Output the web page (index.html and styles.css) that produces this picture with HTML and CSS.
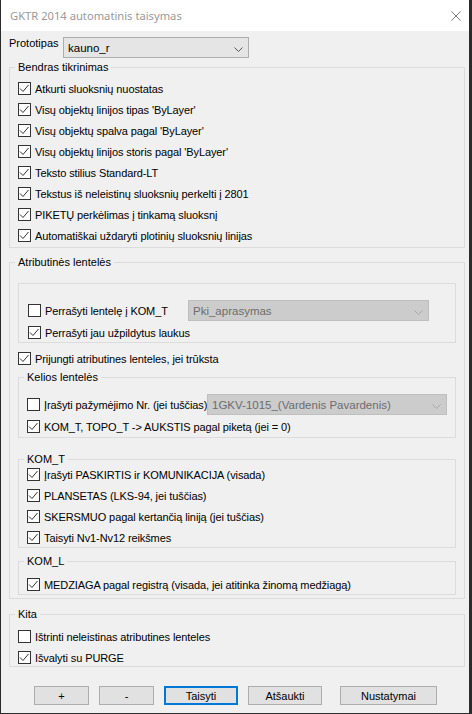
FILE: index.html
```html
<!DOCTYPE html>
<html lang="lt">
<head>
    <meta charset="UTF-8">
    <meta name="viewport" content="width=device-width, initial-scale=1.0">
    <title>GKTR 2014 automatinis taisymas</title>
    <link rel="stylesheet" href="styles.css">
</head>
<body>
    <div class="window">
        <div class="titlebar">
            <span class="title">GKTR 2014 automatinis taisymas</span>
            <svg class="close-icon" width="10" height="10" viewBox="0 0 10 10">
                <path d="M0.5 0.5L9.5 9.5M9.5 0.5L0.5 9.5"/>
            </svg>
        </div>

        <div class="content">
            <div class="proto-row">
                <span class="proto-label">Prototipas</span>
                <div class="combo combo-proto">
                    <span>kauno_r</span>
                    <svg class="chevron" width="9" height="5" viewBox="0 0 9 5"><path d="M0.5 0.5L4.5 4.5L8.5 0.5"/></svg>
                </div>
            </div>

            <!-- Bendras tikrinimas -->
            <fieldset class="group group-general">
                <legend>Bendras tikrinimas</legend>
                <label class="check"><span class="box on"><svg viewBox="0 0 11 11"><path d="M1 5.5L4 8.5L9.5 2"/></svg></span>Atkurti sluoksnių nuostatas</label>
                <label class="check"><span class="box on"><svg viewBox="0 0 11 11"><path d="M1 5.5L4 8.5L9.5 2"/></svg></span>Visų objektų linijos tipas 'ByLayer'</label>
                <label class="check"><span class="box on"><svg viewBox="0 0 11 11"><path d="M1 5.5L4 8.5L9.5 2"/></svg></span>Visų objektų spalva pagal 'ByLayer'</label>
                <label class="check"><span class="box on"><svg viewBox="0 0 11 11"><path d="M1 5.5L4 8.5L9.5 2"/></svg></span>Visų objektų linijos storis pagal 'ByLayer'</label>
                <label class="check"><span class="box on"><svg viewBox="0 0 11 11"><path d="M1 5.5L4 8.5L9.5 2"/></svg></span>Teksto stilius Standard-LT</label>
                <label class="check"><span class="box on"><svg viewBox="0 0 11 11"><path d="M1 5.5L4 8.5L9.5 2"/></svg></span>Tekstus iš neleistinų sluoksnių perkelti į 2801</label>
                <label class="check"><span class="box on"><svg viewBox="0 0 11 11"><path d="M1 5.5L4 8.5L9.5 2"/></svg></span>PIKETŲ perkėlimas į tinkamą sluoksnį</label>
                <label class="check"><span class="box on"><svg viewBox="0 0 11 11"><path d="M1 5.5L4 8.5L9.5 2"/></svg></span>Automatiškai uždaryti plotinių sluoksnių linijas</label>
            </fieldset>

            <!-- Atributinės lentelės -->
            <fieldset class="group group-attr">
                <legend>Atributinės lentelės</legend>

                <div class="subbox">
                    <div class="combo-row">
                        <label class="check label-160"><span class="box"></span>Perrašyti lentelę į KOM_T</label>
                        <div class="combo combo-off combo-pki">
                            <span>Pki_aprasymas</span>
                            <svg class="chevron" width="9" height="5" viewBox="0 0 9 5"><path d="M0.5 0.5L4.5 4.5L8.5 0.5"/></svg>
                        </div>
                    </div>
                    <label class="check"><span class="box on"><svg viewBox="0 0 11 11"><path d="M1 5.5L4 8.5L9.5 2"/></svg></span>Perrašyti jau užpildytus laukus</label>
                </div>

                <label class="check check-join"><span class="box on"><svg viewBox="0 0 11 11"><path d="M1 5.5L4 8.5L9.5 2"/></svg></span>Prijungti atributines lenteles, jei trūksta</label>

                <fieldset class="group group-multi">
                    <legend>Kelios lentelės</legend>
                    <div class="combo-row">
                        <label class="check label-180"><span class="box"></span>Įrašyti pažymėjimo Nr. (jei tuščias)</label>
                        <div class="combo combo-off combo-gkv">
                            <span>1GKV-1015_(Vardenis Pavardenis)</span>
                            <svg class="chevron" width="9" height="5" viewBox="0 0 9 5"><path d="M0.5 0.5L4.5 4.5L8.5 0.5"/></svg>
                        </div>
                    </div>
                    <label class="check"><span class="box on"><svg viewBox="0 0 11 11"><path d="M1 5.5L4 8.5L9.5 2"/></svg></span>KOM_T, TOPO_T -&gt; AUKSTIS pagal piketą (jei = 0)</label>
                </fieldset>

                <fieldset class="group group-komt">
                    <legend>KOM_T</legend>
                    <label class="check"><span class="box on"><svg viewBox="0 0 11 11"><path d="M1 5.5L4 8.5L9.5 2"/></svg></span>Įrašyti PASKIRTIS ir KOMUNIKACIJA (visada)</label>
                    <label class="check"><span class="box on"><svg viewBox="0 0 11 11"><path d="M1 5.5L4 8.5L9.5 2"/></svg></span>PLANSETAS (LKS-94, jei tuščias)</label>
                    <label class="check"><span class="box on"><svg viewBox="0 0 11 11"><path d="M1 5.5L4 8.5L9.5 2"/></svg></span>SKERSMUO pagal kertančią liniją (jei tuščias)</label>
                    <label class="check"><span class="box on"><svg viewBox="0 0 11 11"><path d="M1 5.5L4 8.5L9.5 2"/></svg></span>Taisyti Nv1-Nv12 reikšmes</label>
                </fieldset>

                <fieldset class="group group-koml">
                    <legend>KOM_L</legend>
                    <label class="check"><span class="box on"><svg viewBox="0 0 11 11"><path d="M1 5.5L4 8.5L9.5 2"/></svg></span>MEDZIAGA pagal registrą (visada, jei atitinka žinomą medžiagą)</label>
                </fieldset>
            </fieldset>

            <!-- Kita -->
            <fieldset class="group group-other">
                <legend>Kita</legend>
                <label class="check"><span class="box"></span>Ištrinti neleistinas atributines lenteles</label>
                <label class="check"><span class="box on"><svg viewBox="0 0 11 11"><path d="M1 5.5L4 8.5L9.5 2"/></svg></span>Išvalyti su PURGE</label>
            </fieldset>

            <div class="buttons">
                <button class="btn btn-small">+</button>
                <button class="btn btn-small">-</button>
                <button class="btn btn-mid btn-default">Taisyti</button>
                <button class="btn btn-mid">Atšaukti</button>
                <button class="btn btn-wide">Nustatymai</button>
            </div>
        </div>
    </div>
</body>
</html>
```

FILE: styles.css
```css
* {
    box-sizing: border-box;
}

html, body {
    margin: 0;
    height: 100%;
}

body {
    background-color: #2b2b2b;
    font-family: "Liberation Sans", Arial, sans-serif;
    font-size: 11px;
    color: #000;
}

.window {
    width: 468px;
    height: 713px;
    margin-left: 1px;
    background-color: #f0f0f0;
}

.titlebar {
    height: 31px;
    background-color: #fff;
    display: flex;
    align-items: center;
    justify-content: space-between;
    padding: 0 8px 0 9px;
}

.title {
    font-family: "Noto Sans", "Open Sans", sans-serif;
    font-size: 11.2px;
    color: #999;
}

.close-icon path {
    stroke: #777;
    stroke-width: 1;
    fill: none;
}

.content {
    padding: 6px 4px 0 8px;
}

.proto-row {
    display: flex;
    height: 21px;
}

.proto-label {
    width: 54px;
    line-height: 13px;
}

.combo {
    height: 21px;
    display: flex;
    justify-content: space-between;
    padding: 4px 5px 0 4px;
    border: 1px solid #adadad;
    background-color: #e5e5e5;
    font-size: 11.5px;
    line-height: 13px;
}

.combo .chevron {
    margin-top: 5px;
}

.chevron path {
    fill: none;
    stroke: #555;
    stroke-width: 1;
}

.combo-proto {
    width: 186px;
}

.combo-off {
    background-color: #cccccc;
    border-color: #bfbfbf;
    color: #6d6d6d;
}

.combo-off .chevron path {
    stroke: #a8a8a8;
}

.combo-pki {
    width: 241px;
}

.combo-gkv {
    width: 240px;
}

/* group boxes */
.group {
    margin: 0;
    padding: 0 8px;
    border: 1px solid #dcdcdc;
    display: flex;
    flex-direction: column;
    gap: 4px;
    min-width: 0;
}

.group legend {
    padding: 0 3px;
    margin-left: -3px;
    line-height: 13px;
}

.group-general {
    margin-top: 3px;
    padding-top: 6px;
    padding-bottom: 3px;
}

.group-attr {
    margin-top: 8px;
    padding-top: 14px;
    padding-bottom: 3px;
    gap: 0;
}

.subbox {
    border: 1px solid #dcdcdc;
    padding: 16px 8px 1px 9px;
    display: flex;
    flex-direction: column;
    gap: 3px;
}

.check-join {
    margin-top: 7px;
}

.group-multi {
    margin-top: 4px;
    padding-top: 10px;
    padding-bottom: 2px;
    gap: 3px;
}

.group-komt {
    margin-top: 15px;
    padding-top: 0;
    padding-bottom: 1px;
}

.group-koml {
    margin-top: 7px;
    padding-top: 8px;
    padding-bottom: 1px;
}

.group-other {
    margin-top: 9px;
    padding-top: 7px;
    padding-bottom: 0;
}

/* checkboxes */
.check {
    display: flex;
    align-items: center;
    height: 17px;
    gap: 4px;
    white-space: nowrap;
    letter-spacing: -0.1px;
}

.box {
    width: 13px;
    height: 13px;
    flex: none;
    border: 1px solid #333;
    background-color: #fff;
}

.box svg {
    display: block;
    width: 11px;
    height: 11px;
}

.box svg path {
    fill: none;
    stroke: #333;
    stroke-width: 1;
}

.combo-row {
    display: flex;
    align-items: center;
    height: 21px;
}

.label-160 {
    width: 160px;
}

.label-180 {
    width: 180px;
}

/* buttons */
.buttons {
    display: flex;
    margin: 19px 0 0 25px;
}

.btn {
    height: 19px;
    padding: 0;
    margin-right: 10px;
    border: 1px solid #adadad;
    background-color: #e1e1e1;
    font-family: "Liberation Sans", Arial, sans-serif;
    font-size: 11px;
    color: #000;
}

.btn-small {
    width: 55px;
}

.btn-mid {
    width: 74px;
}

.btn-mid:nth-child(4) {
    margin-right: 18px;
}

.btn-wide {
    width: 97px;
}

.btn-default {
    border: 2px solid #0078d7;
}
```
